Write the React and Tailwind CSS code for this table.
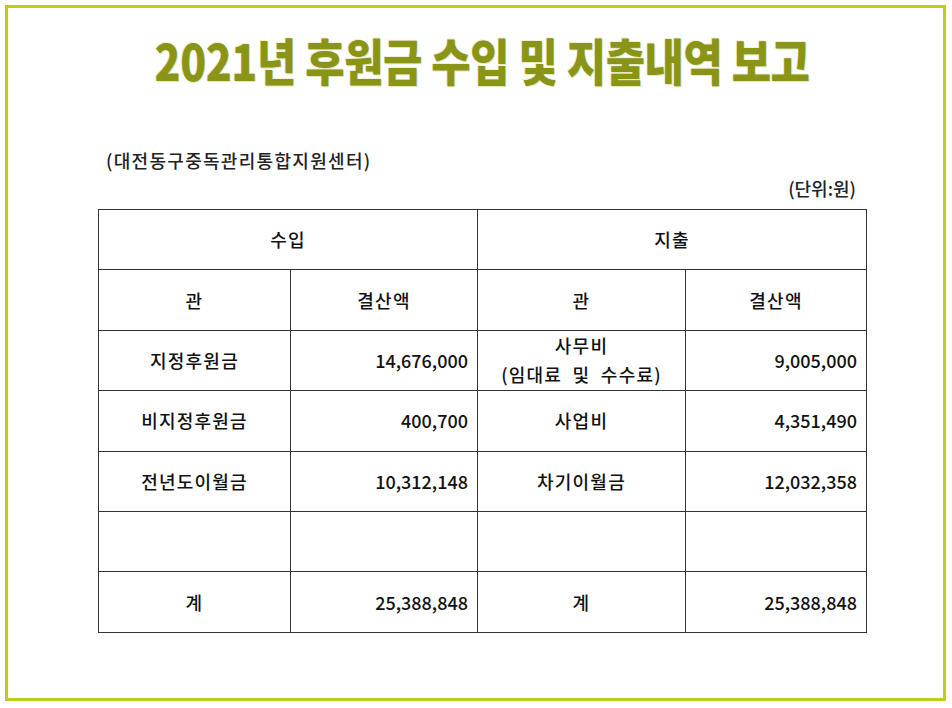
const font = { fontFamily: '"Noto Sans CJK KR", "Noto Sans", sans-serif' }

const rows = [
  { a: '지정후원금', b: '14,676,000', c: ['사무비', '(임대료  및  수수료)'], d: '9,005,000' },
  { a: '비지정후원금', b: '400,700', c: ['사업비'], d: '4,351,490' },
  { a: '전년도이월금', b: '10,312,148', c: ['차기이월금'], d: '12,032,358' },
  { a: '', b: '', c: [''], d: '' },
  { a: '계', b: '25,388,848', c: ['계'], d: '25,388,848' },
]

const cell = 'border-[1.5px] border-[#333] h-[60.4px] p-0 align-middle'
const ko = `${cell} text-center tracking-[1.2px]`
const num = `${cell} text-right pr-[9px]`

export default function App() {
  return (
    <div className="w-[952px] h-[708px] bg-white p-[5px]" style={font}>
      <div className="h-[696px] w-[941px] border-[3px] border-[#bfcc1c] flex flex-col">
        <div className="flex justify-center pt-[21px] pl-[14px]">
          <h1
            className="inline-block text-[50px] leading-[60px] font-black text-[#8a9416] tracking-[-0.01em] scale-x-[0.855] whitespace-nowrap"
            style={{ textShadow: '1px 1px 0 #e4e8c0, -1px -1px 0 #eef0d8' }}
          >
            2021년 후원금 수입 및 지출내역 보고
          </h1>
        </div>

        <div className="ml-[98px] mt-[61px] text-[18px] leading-[20px] tracking-[1.3px] font-medium text-[#222] whitespace-nowrap">
          (대전동구중독관리통합지원센터)
        </div>

        <div className="w-[768px] ml-[90px] flex justify-end mt-[8px] pr-[10px] text-[18px] leading-[20px] font-medium text-[#222]">
          (단위:원)
        </div>

        <table className="ml-[90px] mt-[11px] w-[768px] border-collapse table-fixed text-[18px] font-medium text-[#111]">
          <colgroup>
            <col className="w-[192px]" />
            <col className="w-[187px]" />
            <col className="w-[208px]" />
            <col className="w-[181px]" />
          </colgroup>
          <tbody>
            <tr>
              <td colSpan={2} className={ko}>수입</td>
              <td colSpan={2} className={ko}>지출</td>
            </tr>
            <tr>
              <td className={ko}>관</td>
              <td className={ko}>결산액</td>
              <td className={ko}>관</td>
              <td className={ko}>결산액</td>
            </tr>
            {rows.map((r, i) => (
              <tr key={i}>
                <td className={ko}>{r.a}</td>
                <td className={num}>{r.b}</td>
                <td className={ko}>
                  {r.c.map((t, j) => (
                    <div key={j} className="leading-[29px] whitespace-pre">{t}</div>
                  ))}
                </td>
                <td className={num}>{r.d}</td>
              </tr>
            ))}
          </tbody>
        </table>
      </div>
    </div>
  )
}
